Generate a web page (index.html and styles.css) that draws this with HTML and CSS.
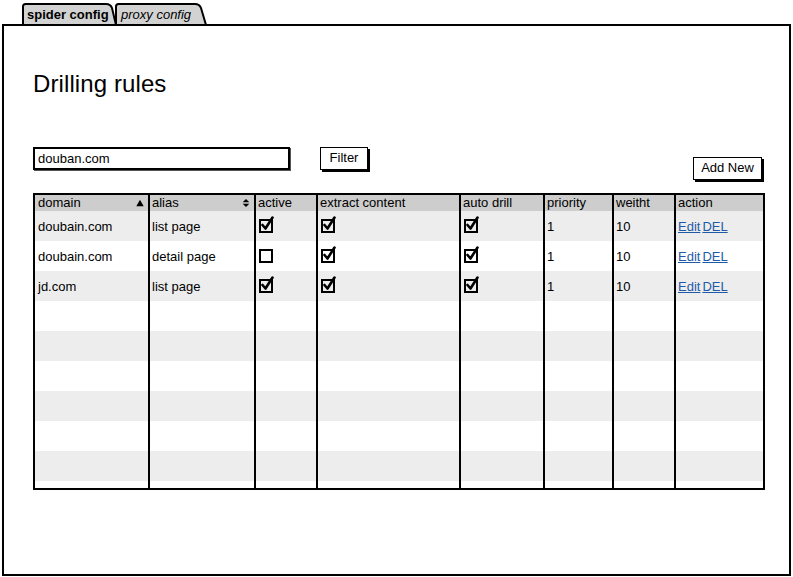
FILE: index.html
```html
<!DOCTYPE html>
<html>
<head>
<meta charset="utf-8">
<link rel="stylesheet" href="styles.css">
</head>
<body>
<div class="tabs">
  <div class="tab tab-active">
    <svg class="tab-shape" viewBox="0 0 95 21" preserveAspectRatio="none"><path d="M1 22 V3.5 Q1 1 3.5 1 H84 Q88.5 1 90 5 L94 22 Z" vector-effect="non-scaling-stroke"/></svg>
    <span class="tab-label">spider config</span>
  </div>
  <div class="tab tab-inactive">
    <svg class="tab-shape" viewBox="0 0 92 21" preserveAspectRatio="none"><path d="M1 22 V3.5 Q1 1 3.5 1 H80 Q84.5 1 86 5 L91 22 Z" vector-effect="non-scaling-stroke"/></svg>
    <span class="tab-label">proxy config</span>
  </div>
</div>
<div class="panel">
  <h1 class="title">Drilling rules</h1>
  <div class="toolbar">
    <div class="search">douban.com</div>
    <div class="btn btn-filter">Filter</div>
    <div class="btn btn-add">Add New</div>
  </div>
  <div class="grid">
    <div class="row row-head">
      <div class="cell cell-first">domain <svg class="sort" viewBox="0 0 8 7"><path d="M4 0.3 L7.7 6.7 H0.3 Z"/></svg></div>
      <div class="cell">alias <svg class="sort" viewBox="0 0 8 9"><path d="M4 0 L7.7 3.7 H0.3 Z M4 9 L7.7 5.3 H0.3 Z"/></svg></div>
      <div class="cell">active</div>
      <div class="cell">extract content</div>
      <div class="cell">auto drill</div>
      <div class="cell">priority</div>
      <div class="cell">weitht</div>
      <div class="cell cell-last">action</div>
    </div>
    <div class="row row-alt">
      <div class="cell cell-first">doubain.com</div>
      <div class="cell">list page</div>
      <div class="cell"><svg class="chk" viewBox="0 0 15 17"><rect x="1" y="4" width="12" height="12"/><path d="M3.5 9 L6.5 12.5 L13.5 1.5"/></svg></div>
      <div class="cell"><svg class="chk" viewBox="0 0 15 17"><rect x="1" y="4" width="12" height="12"/><path d="M3.5 9 L6.5 12.5 L13.5 1.5"/></svg></div>
      <div class="cell"><svg class="chk" viewBox="0 0 15 17"><rect x="1" y="4" width="12" height="12"/><path d="M3.5 9 L6.5 12.5 L13.5 1.5"/></svg></div>
      <div class="cell">1</div>
      <div class="cell">10</div>
      <div class="cell cell-last"><a class="link" href="#">Edit</a> <a class="link" href="#">DEL</a></div>
    </div>
    <div class="row">
      <div class="cell cell-first">doubain.com</div>
      <div class="cell">detail page</div>
      <div class="cell"><svg class="chk" viewBox="0 0 15 17"><rect x="1" y="4" width="12" height="12"/></svg></div>
      <div class="cell"><svg class="chk" viewBox="0 0 15 17"><rect x="1" y="4" width="12" height="12"/><path d="M3.5 9 L6.5 12.5 L13.5 1.5"/></svg></div>
      <div class="cell"><svg class="chk" viewBox="0 0 15 17"><rect x="1" y="4" width="12" height="12"/><path d="M3.5 9 L6.5 12.5 L13.5 1.5"/></svg></div>
      <div class="cell">1</div>
      <div class="cell">10</div>
      <div class="cell cell-last"><a class="link" href="#">Edit</a> <a class="link" href="#">DEL</a></div>
    </div>
    <div class="row row-alt">
      <div class="cell cell-first">jd.com</div>
      <div class="cell">list page</div>
      <div class="cell"><svg class="chk" viewBox="0 0 15 17"><rect x="1" y="4" width="12" height="12"/><path d="M3.5 9 L6.5 12.5 L13.5 1.5"/></svg></div>
      <div class="cell"><svg class="chk" viewBox="0 0 15 17"><rect x="1" y="4" width="12" height="12"/><path d="M3.5 9 L6.5 12.5 L13.5 1.5"/></svg></div>
      <div class="cell"><svg class="chk" viewBox="0 0 15 17"><rect x="1" y="4" width="12" height="12"/><path d="M3.5 9 L6.5 12.5 L13.5 1.5"/></svg></div>
      <div class="cell">1</div>
      <div class="cell">10</div>
      <div class="cell cell-last"><a class="link" href="#">Edit</a> <a class="link" href="#">DEL</a></div>
    </div>
    <div class="row"><div class="cell"></div><div class="cell"></div><div class="cell"></div><div class="cell"></div><div class="cell"></div><div class="cell"></div><div class="cell"></div><div class="cell cell-last"></div></div>
    <div class="row row-alt"><div class="cell"></div><div class="cell"></div><div class="cell"></div><div class="cell"></div><div class="cell"></div><div class="cell"></div><div class="cell"></div><div class="cell cell-last"></div></div>
    <div class="row"><div class="cell"></div><div class="cell"></div><div class="cell"></div><div class="cell"></div><div class="cell"></div><div class="cell"></div><div class="cell"></div><div class="cell cell-last"></div></div>
    <div class="row row-alt"><div class="cell"></div><div class="cell"></div><div class="cell"></div><div class="cell"></div><div class="cell"></div><div class="cell"></div><div class="cell"></div><div class="cell cell-last"></div></div>
    <div class="row"><div class="cell"></div><div class="cell"></div><div class="cell"></div><div class="cell"></div><div class="cell"></div><div class="cell"></div><div class="cell"></div><div class="cell cell-last"></div></div>
    <div class="row row-alt"><div class="cell"></div><div class="cell"></div><div class="cell"></div><div class="cell"></div><div class="cell"></div><div class="cell"></div><div class="cell"></div><div class="cell cell-last"></div></div>
    <div class="row row-tail"><div class="cell"></div><div class="cell"></div><div class="cell"></div><div class="cell"></div><div class="cell"></div><div class="cell"></div><div class="cell"></div><div class="cell cell-last"></div></div>
  </div>
</div>
</body>
</html>
```

FILE: styles.css
```css
* { box-sizing: border-box; }
html, body { margin: 0; padding: 0; background: #fff; }
body {
  font-family: "Liberation Sans", Arial, sans-serif;
  font-size: 13px;
  color: #000;
  width: 793px;
  height: 577px;
  overflow: hidden;
  padding-top: 3px;
}
.tabs {
  display: flex;
  margin-left: 22px;
  height: 21px;
  position: relative;
  z-index: 1;
}
.tab {
  position: relative;
  height: 21px;
  line-height: 21px;
  padding-top: 1px;
}
.tab-active { width: 95px; z-index: 2; }
.tab-inactive { width: 92px; margin-left: -2px; z-index: 1; }
.tab-shape {
  position: absolute;
  left: 0; top: 0;
  width: 100%;
  height: 100%;
  overflow: visible;
}
.tab-shape path {
  fill: #d2d2d2;
  stroke: #000;
  stroke-width: 2;
}
.tab-label { position: relative; }
.tab-active .tab-label { font-weight: bold; padding-left: 5px; }
.tab-inactive .tab-label { font-style: italic; padding-left: 6px; }
.panel {
  margin-left: 2px;
  width: 789px;
  height: 552px;
  border: 2px solid #000;
  padding: 44px 24px 0 29px;
  background: #fff;
}
.title {
  margin: 0;
  font-size: 24px;
  line-height: 28px;
  font-weight: normal;
  letter-spacing: 0.1px;
}
.toolbar {
  display: flex;
  align-items: flex-start;
  margin-top: 49px;
}
.search {
  width: 257px;
  height: 23px;
  border: 2px solid #000;
  padding-left: 3px;
  line-height: 19px;
  box-shadow: 1px 1px 0 #555;
}
.btn {
  height: 23px;
  border: 1px solid #000;
  box-shadow: 2px 2px 0 #000;
  text-align: center;
  line-height: 20px;
  background: #fff;
}
.btn-filter { width: 48px; margin-left: 30px; }
.btn-add { width: 69px; margin-left: auto; margin-top: 10px; margin-right: 3px; }
.grid {
  margin-top: 13px;
  border: 2px solid #000;
}
.row {
  display: grid;
  grid-template-columns: 115px 106px 62px 143px 84px 69px 62px 1fr;
  height: 30px;
}
.row-head { height: 16px; background: #cdcdcd; }
.row-alt { background: #ededed; }
.row-tail { height: 7px; }
.cell {
  border-right: 2px solid #000;
  padding-left: 2px;
  display: flex;
  align-items: center;
  white-space: nowrap;
}
.row-head .cell { line-height: 16px; }
.cell-first { padding-left: 3px; }
.cell-last { border-right: none; }
.row-head .cell-first, .row-head .cell:nth-child(2) {
  justify-content: space-between;
  padding-right: 4px;
}
.sort { width: 8px; height: 8px; margin-top: -1px; }
.sort path { fill: #000; }
.chk {
  width: 15px;
  height: 17px;
  margin-left: 1px;
  margin-top: -4px;
}
.chk rect { fill: none; stroke: #000; stroke-width: 2; }
.chk path { fill: none; stroke: #000; stroke-width: 2.6; stroke-linecap: round; stroke-linejoin: round; }
.link {
  color: #1f5aa8;
  text-decoration: underline;
  margin-right: 3px;
}
.link + .link { margin-left: -1px; }
```
